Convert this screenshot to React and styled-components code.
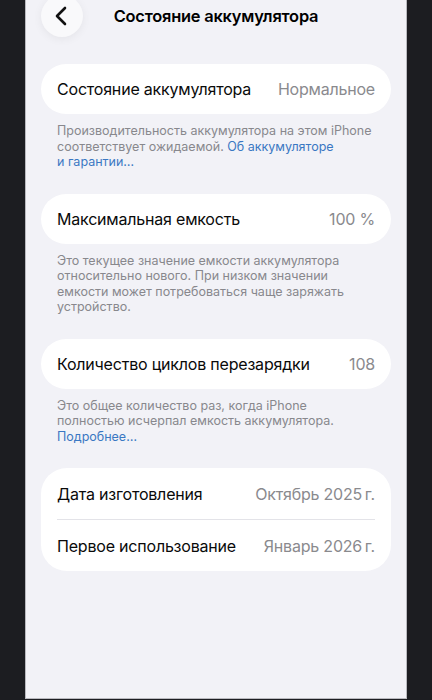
import React from "react";
import styled, { createGlobalStyle } from "styled-components";

const GlobalStyle = createGlobalStyle`
  html, body {
    margin: 0;
    padding: 0;
    background: #1c1d21;
  }
  body {
    font-family: Inter, "Noto Sans", "Liberation Sans", sans-serif;
    -webkit-font-smoothing: antialiased;
  }
`;

const Screen = styled.div`
  display: flex;
  justify-content: center;
  height: 700px;
  overflow: hidden;
`;

const Frame = styled.div`
  box-sizing: border-box;
  width: 382px;
  height: 699px;
  background: #f2f2f7;
  border: 1px solid #b9b9be;
  border-top: none;
  padding: 0 15px;
  overflow: hidden;
`;

const Header = styled.div`
  display: grid;
  grid-template-columns: 42px 1fr 42px;
  align-items: center;
  height: 42px;
  margin-top: -5px;
`;

const BackButton = styled.button`
  width: 42px;
  height: 42px;
  border-radius: 50%;
  border: none;
  background: #f9f9fb;
  box-shadow: 0 2px 10px rgba(0, 0, 0, 0.06);
  display: flex;
  align-items: center;
  justify-content: center;
  padding: 0 2px 0 0;
`;

const Title = styled.h1`
  margin: 0;
  text-align: center;
  font-size: 16.4px;
  font-weight: 600;
  color: #000;
  letter-spacing: -0.2px;
`;

const Content = styled.div`
  padding-top: 27px;
`;

const Section = styled.section`
  margin-bottom: 24px;
`;

const Card = styled.div`
  background: #fff;
  border-radius: 26px;
  padding: 0 16px;
`;

const Row = styled.div`
  display: flex;
  align-items: center;
  justify-content: space-between;
  height: ${({ $h }) => $h || 50}px;
  border-top: ${({ $divider }) => ($divider ? "1px solid #e3e3e8" : "none")};
  font-size: 16px;
  letter-spacing: -0.2px;
`;

const Label = styled.span`
  color: #0a0a0a;
`;

const Value = styled.span`
  color: #8a8a8e;
`;

const Footer = styled.p`
  margin: 9px 16px 0;
  font-size: 12.5px;
  line-height: 15.5px;
  color: #88888d;
  white-space: nowrap;
`;

const Link = styled.a`
  color: #3a78c3;
  text-decoration: none;
`;

const Chevron = () => (
  <svg width="14" height="20" viewBox="0 0 14 20" fill="none">
    <path
      d="M11 2 L3 10 L11 18"
      stroke="#111"
      strokeWidth="2.6"
      strokeLinecap="round"
      strokeLinejoin="round"
    />
  </svg>
);

const App = () => {
  return (
    <>
      <GlobalStyle />
      <Screen>
        <Frame>
          <Header>
            <BackButton>
              <Chevron />
            </BackButton>
            <Title>Состояние аккумулятора</Title>
            <span />
          </Header>
          <Content>
            <Section>
              <Card>
                <Row>
                  <Label>Состояние аккумулятора</Label>
                  <Value>Нормальное</Value>
                </Row>
              </Card>
              <Footer>
                Производительность аккумулятора на этом iPhone
                <br />
                соответствует ожидаемой. <Link>Об аккумуляторе</Link>
                <br />
                <Link>и гарантии…</Link>
              </Footer>
            </Section>
            <Section>
              <Card>
                <Row>
                  <Label>Максимальная емкость</Label>
                  <Value>100 %</Value>
                </Row>
              </Card>
              <Footer>
                Это текущее значение емкости аккумулятора
                <br />
                относительно нового. При низком значении
                <br />
                емкости может потребоваться чаще заряжать
                <br />
                устройство.
              </Footer>
            </Section>
            <Section>
              <Card>
                <Row>
                  <Label>Количество циклов перезарядки</Label>
                  <Value>108</Value>
                </Row>
              </Card>
              <Footer>
                Это общее количество раз, когда iPhone
                <br />
                полностью исчерпал емкость аккумулятора.
                <br />
                <Link>Подробнее…</Link>
              </Footer>
            </Section>
            <Section>
              <Card>
                <Row $h={51}>
                  <Label>Дата изготовления</Label>
                  <Value>Октябрь 2025{"\u2009"}г.</Value>
                </Row>
                <Row $h={51} $divider>
                  <Label>Первое использование</Label>
                  <Value>Январь 2026{"\u2009"}г.</Value>
                </Row>
              </Card>
            </Section>
          </Content>
        </Frame>
      </Screen>
    </>
  );
};

export default App;
